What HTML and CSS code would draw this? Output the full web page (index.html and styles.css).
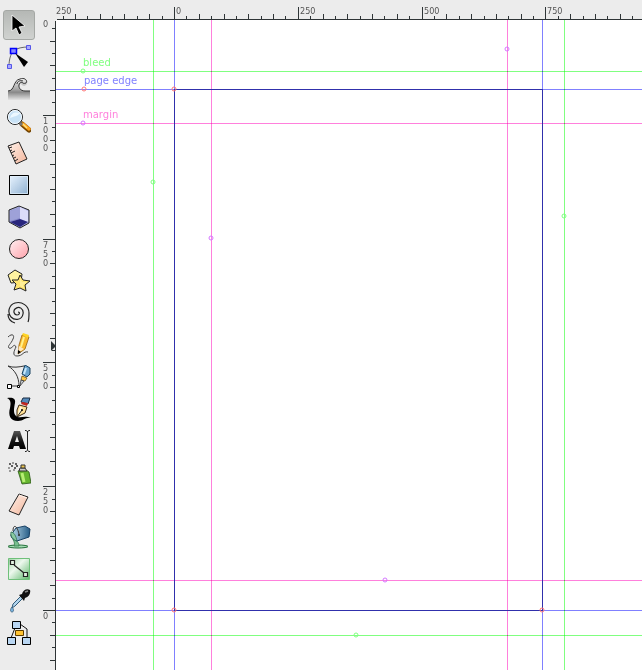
FILE: index.html
```
<!DOCTYPE html>
<html lang="en">
<head>
<meta charset="utf-8">
<title>Page guides</title>
<link rel="stylesheet" href="styles.css">
</head>
<body>
<div class="app">
<nav class="toolbox" aria-label="Tools">
<button class="tool active" aria-label="Select"><svg viewBox="0 0 24 24"><path d="M5 2V18L9 15L12 22L15 20L12 14L18 13Z" fill="#000" stroke="#fff" stroke-width=".8"/></svg></button>
<button class="tool" aria-label="Edit nodes"><svg viewBox="0 0 24 24"><path d="M2 21C2 14 4 9 6 6C10 3 16 2 21 2" fill="none" stroke="#666"/><g fill="#aaf" stroke="#5555e8"><path d="M.5 19.500h4v4h-4zM19.500.5h4v4h-4z"/></g><path d="M3.500 3.500h6v5h-6z" fill="#88f" stroke="#00f" stroke-width="1.500"/><path d="M8 8L21 17L17 22Z"/></svg></button>
<button class="tool" aria-label="Tweak"><svg viewBox="0 0 24 24"><defs><linearGradient id="wave" x2="0" y2="1"><stop stop-color="#f4f4f4"/><stop offset=".5" stop-color="#aaa"/><stop offset=".65" stop-color="#888"/><stop offset="1" stop-color="#e4e4e4"/></linearGradient></defs><path d="M1 23V14C8 14 6 2 14 1C18 0 22 4 20 7C18 10 14 9 14 6C11 8 12 13 17 14H23V23Z" fill="url(#wave)"/><path d="M1 14C8 14 6 3 13 2C18 0 21 4 19 6C17 7 15 6 15 5C10 6 11 14 18 14H23M10 7C10 4 14 3 16 4" fill="none" stroke="#333"/></svg></button>
<button class="tool" aria-label="Zoom"><svg viewBox="0 0 24 24"><path d="M15 15L22 21" stroke="#754500" stroke-width="5" stroke-linecap="round"/><path d="M16 15L22 20" stroke="#fda21c" stroke-width="3.500" stroke-linecap="round"/><path d="M16 15L20 19" stroke="#ffe27b" stroke-width="1.500"/><path d="M12 13L15 16" stroke="#777" stroke-width="3"/><circle cx="8" cy="8" r="7.500" fill="#c8e2f6" stroke="#222"/><circle cx="8" cy="8" r="6.500" fill="none" stroke="#f8fcff"/><path d="M3 9C5 3 8 3 13 4C10 8 7 7 3 9" fill="#edf8ff"/></svg></button>
<button class="tool" aria-label="Measure"><svg viewBox="0 0 24 24"><defs><linearGradient id="peach" x2="1" y2="1"><stop stop-color="#fff2ea"/><stop offset="1" stop-color="#f3b59b"/></linearGradient></defs><path d="M1 5L12 1L20 18L9 23Z" fill="url(#peach)" stroke="#222"/><path d="M2 7L5 6M3 10L5 9M4 12L8 10M5 15L7 14M7 17L9 16M8 20L11 18" stroke="#222"/></svg></button>
<button class="tool" aria-label="Rectangle"><svg viewBox="0 0 24 24"><defs><linearGradient id="sky" x2="1" y2="1"><stop stop-color="#e9f4ff"/><stop offset="1" stop-color="#8dafd0"/></linearGradient></defs><path d="M2.500 2.500h19v19h-19z" fill="url(#sky)" stroke="#000"/><path d="M3.500 3.500h17v17h-17z" fill="none" stroke="#e4f0fa" stroke-width=".7"/></svg></button>
<button class="tool" aria-label="3D box"><svg viewBox="0 0 24 24"><path d="M2 5L12 1L22 5V18L13 23L2 17Z" fill="#aaaee0" stroke="#222"/><path d="M3 6L13 2V14L3 17Z" fill="#8589c8"/><path d="M13 2L21 6V17L13 14Z" fill="#dcdcf8"/><path d="M3 17L13 14L21 17L13 22Z" fill="#29267d"/><path d="M3 6L13 2V13L3 16Z" fill="#9ea1d8"/></svg></button>
<button class="tool" aria-label="Ellipse"><svg viewBox="0 0 24 24"><defs><linearGradient id="rose" x2="1" y2="1"><stop stop-color="#fff0f2"/><stop offset="1" stop-color="#ffa1aa"/></linearGradient></defs><circle cx="12" cy="12" r="9.500" fill="url(#rose)" stroke="#222"/></svg></button>
<button class="tool" aria-label="Star"><svg viewBox="0 0 24 24"><g fill="#fff3a0" stroke="#222"><path d="M1 6L8 1L15 5L14 13L4 14Z"/><path d="M13 6L16 11L23 12L18 16L19 22L13 19L7 21L9 15L5 11L11 11Z" fill="#ffe56f"/></g><path d="M13 9L15 13L20 13L16 16L17 19L13 17" fill="#ffef99"/></svg></button>
<button class="tool" aria-label="Spiral"><svg viewBox="0 0 24 24"><path d="M11 11C13 11 13 14 10 14C7 14 6 10 8 8C12 4 17 8 16 13C15 19 8 20 4 16C0 11 2 4 8 2C15 0 22 5 22 12C22 16 22 19 21 21M8 22C4 21 1 18 1 13" fill="none" stroke="#222" stroke-width="1.200"/></svg></button>
<button class="tool" aria-label="Pencil"><svg viewBox="0 0 24 24"><path d="M1 4C5 0 8 2 6 6C4 11 0 13 2 15C5 17 7 9 9 14C7 18 5 23 10 23C16 23 16 18 21 19" fill="none" stroke="#444"/><path d="M15 2L22 4L18 16L11 21L12 12Z" fill="#f8b82c" stroke="#8a5200" stroke-width=".7"/><path d="M17 4L14 14" stroke="#fff18c" stroke-width="2"/><path d="M12 13L17 16L11 20Z" fill="#ffe8c0"/><path d="M11 17L14 19L11 21Z"/><path d="M16 0L22 2L21 5L15 2Z" fill="#ffd526"/></svg></button>
<button class="tool" aria-label="Bezier"><svg viewBox="0 0 24 24"><path d="M12 21H2M12 21C12 12 8 5 1 1C6 3 12 2 17 1" fill="none" stroke="#333"/><path d="M.5 19.500h4v4h-4zM10.500 20.500h2v2h-2z" fill="#fff" stroke="#000"/><path d="M18 0L23 3L23 9L20 12L15 9Z" fill="#6ca5cf" stroke="#194260"/><path d="M19 3L17 9" stroke="#c5e7fb" stroke-width="2"/><path d="M15 11L20 13L18 16L14 15Z" fill="#ffc847" stroke="#5d4410" stroke-width=".7"/><path d="M14 15L17 16L13 21Z" fill="#c9d0d6" stroke="#333" stroke-width=".8"/></svg></button>
<button class="tool" aria-label="Calligraphy"><svg viewBox="0 0 24 24"><path d="M0 1C5 0 9 1 8 6C7 11 6 16 9 19C13 22 17 18 24 21C18 20 17 24 11 24C3 24 1 18 3 11C4 6 4 3 0 1Z"/><path d="M16 1L23 1L21 7L14 5Z" fill="#568abb" stroke="#192b41"/><path d="M15 5L21 6L20 9L14 7Z" fill="#c3261e"/><path d="M12 8L20 10L18 16L10 20L10 13Z" fill="#ffe096" stroke="#3d2b14"/><path d="M14 10L12 17" stroke="#fff8df" stroke-width="2"/><path d="M15 13L10 20" stroke="#222"/><circle cx="15" cy="13" r="1"/></svg></button>
<button class="tool" aria-label="Text"><svg viewBox="0 0 24 24"><defs><linearGradient id="ink" x2="0" y2="1"><stop stop-color="#555"/><stop offset=".6" stop-color="#111"/><stop offset="1"/></linearGradient></defs><path d="M7 2H13L19 20H13L12 17H7L6 20H1ZM10 7L8 13H12Z" fill="url(#ink)" fill-rule="evenodd"/><path d="M18 1.500H19L20.500 2.500L22 1.500H23M20.500 2V21M18 22.500H19L20.500 21.500L22 22.500H23" fill="none" stroke="#222"/></svg></button>
<button class="tool" aria-label="Spray"><svg viewBox="0 0 24 24"><path d="M11 10L19 9L22 11L24 22L15 23Z" fill="#65b52f" stroke="#285514" stroke-width=".8"/><path d="M15 12L17 21" stroke="#b7ee74" stroke-width="3"/><path d="M12 10L13 7H18L20 10Z" fill="#ccc" stroke="#333"/><path d="M14 4L18 4L18 7H14Z" fill="#eac34e" stroke="#333"/><g fill="#333"><circle cx="3" cy="3" r="1"/><circle cx="6" cy="2" r=".8"/><circle cx="10" cy="5" r="1"/><circle cx="5" cy="5" r="1"/><circle cx="8" cy="7" r="1"/><circle cx="2" cy="7" r=".8"/><circle cx="7" cy="9" r=".8"/><circle cx="9" cy="3" r="1"/><circle cx="3" cy="10" r=".8"/></g></svg></button>
<button class="tool" aria-label="Eraser"><svg viewBox="0 0 24 24"><path d="M12 1L21 4L12 22L2 18Z" fill="url(#peach)" stroke="#222"/><path d="M12 2L20 5" stroke="#fff4ed"/></svg></button>
<button class="tool" aria-label="Fill"><svg viewBox="0 0 24 24"><ellipse cx="11" cy="21.500" rx="10" ry="1.500" fill="#a2dab2" stroke="#237039"/><path d="M4 9C4 13 9 17 7 21H12C12 16 9 17 8 12Z" fill="#78bf8e" stroke="#287040" stroke-width=".7"/><defs><linearGradient id="pail"><stop stop-color="#bcdced"/><stop offset="1" stop-color="#245b85"/></linearGradient></defs><path d="M9 3L18 1L23 4L22 12L10 16C6 14 4 13 4 10Z" fill="url(#pail)" stroke="#174064"/><path d="M4 7C7 7 9 11 10 16C6 15 3 11 4 7Z" fill="#89c9a0" stroke="#236144" stroke-width=".7"/><path d="M6 6C6-1 10 0 12 9" fill="none" stroke="#333"/><circle cx="12" cy="10" r="1" fill="#222"/></svg></button>
<button class="tool" aria-label="Gradient"><svg viewBox="0 0 24 24"><defs><linearGradient id="green" x2="1" y2="1"><stop stop-color="#9bd3a3"/><stop offset=".4" stop-color="#edf8ee"/><stop offset="1" stop-color="#5bb568"/></linearGradient></defs><path d="M1.500 1.500h21v21h-21z" fill="url(#green)" stroke="#6fc07a"/><path d="M7 8L17 16" stroke="#222" stroke-width="1.200"/><path d="M3.500 3.500h4v4h-4zM16.500 15.500h4v4h-4z" fill="#e2f4e3" stroke="#222" stroke-width="1.200"/></svg></button>
<button class="tool" aria-label="Dropper"><svg viewBox="0 0 24 24"><path d="M14 7L16 9L8 17L5 19L6 15Z" fill="#b1d4ed" stroke="#315a78"/><path d="M12 6L15 5C16 1 20-1 23 1C24 4 22 8 18 9L17 12Z" fill="#111"/><path d="M18 3L21 2" stroke="#888" stroke-width="1.500"/><path d="M5 18C3 20 3 23 5 23C7 23 7 20 5 18Z" fill="#79b3df" stroke="#31536c" stroke-width=".7"/></svg></button>
<button class="tool" aria-label="Connector"><svg viewBox="0 0 24 24"><path d="M8 7L4 17M13 3L20 8V17" fill="none" stroke="#111"/><g fill="#b9d6f2" stroke="#000"><path d="M5.500.5h8v7h-8zM.5 16.500h8v7h-8zM15.500 16.500h8v7h-8z"/></g><path d="M8.500 9.500h8v5h-8z" fill="#ffc332" stroke="#5c3c00"/></svg></button>
</nav>
<svg class="ruler side"><rect x="13" y="21" width="1" height="100%"/><path d="M9 341L14 346L9 351Z"/><g id="side-ticks"></g></svg>
<main class="workspace">
<svg class="ruler top"><rect x="1" y="19" width="100%" height="1"/><g id="top-ticks"></g></svg>
<svg class="canvas" aria-label="Page with guides">
<g class="guides">
<g class="bleed"><rect y="51" width="100%" height="1"/><rect y="615" width="100%" height="1"/><rect x="97" width="1" height="100%"/><rect x="508" width="1" height="100%"/></g>
<g class="edge"><rect y="69" width="100%" height="1"/><rect y="590" width="100%" height="1"/><rect x="118" width="1" height="100%"/><rect x="486" width="1" height="100%"/></g>
<g class="margin"><rect y="103" width="100%" height="1"/><rect y="560" width="100%" height="1"/><rect x="155" width="1" height="100%"/><rect x="451" width="1" height="100%"/></g>
</g>
<path class="page" fill-rule="evenodd" d="M118 69H487V591H118ZM119 70V590H486V70Z"/>
<g class="handles">
<g stroke="#80ff80"><circle cx="27" cy="51" r="2"/><circle cx="97" cy="162" r="2"/><circle cx="508" cy="196" r="2"/><circle cx="300" cy="615" r="2"/></g>
<g stroke="#ff7777"><circle cx="28" cy="69" r="2"/><circle cx="118" cy="69" r="2"/><circle cx="118" cy="590" r="2"/><circle cx="486" cy="590" r="2"/></g>
<g stroke="#d577ff"><circle cx="27" cy="103" r="2"/><circle cx="155" cy="218" r="2"/><circle cx="451" cy="29" r="2"/><circle cx="329" cy="560" r="2"/></g>
</g>
<text class="bleed" x="27" y="46">bleed</text><text class="edge" x="28" y="64">page edge</text><text class="margin" x="27" y="98">margin</text>
</svg>
</main>
</div>
<script src="rulers.js"></script>
</body>
</html>
```
FILE: styles.css
```
body {
  margin: 0;
  background: #ececec;
}
.app {
  display: grid;
  grid-template-columns: 42px 14px 1fr;
  height: 100vh;
  overflow: hidden;
}
.toolbox {
  display: flex;
  flex-direction: column;
  gap: 2px;
  padding: 10px 7px 0 3px;
}
.tool {
  display: flex;
  flex: none;
  align-items: center;
  justify-content: center;
  height: 30px;
  padding: 0;
  border: 1px solid transparent;
  border-radius: 3px;
  background: none;
}
.tool.active {
  border-color: #a5a8a5;
  background: linear-gradient(#b5b8b5, #d0d2d0);
}
.tool svg {
  width: 24px;
  height: 24px;
}
.ruler {
  display: block;
  width: 100%;
  fill: #2e3436;
}
.ruler text {
  fill: #555;
  font: 9px "DejaVu Sans Condensed", "DejaVu Sans", sans-serif;
}
.side {
  height: 100%;
}
.workspace {
  display: grid;
  grid-template-rows: 20px 1fr;
  min-width: 0;
  min-height: 0;
}
.top {
  height: 20px;
}
.canvas {
  display: block;
  width: 100%;
  height: 100%;
  background: #fff;
  font: 10px "DejaVu Sans", sans-serif;
}
.guides rect {
  mix-blend-mode: multiply;
}
.bleed {
  fill: #80ff80;
}
.edge {
  fill: #8080ff;
}
.margin {
  fill: #ff80dc;
}
.page {
  fill: #3030ac;
}
.handles {
  fill: none;
}
```
FILE: rulers.js
```
const NS = "http://www.w3.org/2000/svg";
const STEP = 12.38;
const topTicks = document.getElementById("top-ticks");
const sideTicks = document.getElementById("side-ticks");

function add(parent, name, attrs, text) {
  const node = document.createElementNS(NS, name);
  for (const key in attrs) node.setAttribute(key, attrs[key]);
  if (text) node.textContent = text;
  parent.appendChild(node);
}

// Ticks every 25 units, with a label every 250
function drawRulers() {
  topTicks.replaceChildren();
  sideTicks.replaceChildren();

  const width = window.innerWidth - 56;
  for (let i = -9; 118 + i * STEP < width; i++) {
    const x = Math.round(118 + i * STEP);
    const y = i % 10 === 0 ? 7 : i % 2 === 0 ? 14 : 16;
    add(topTicks, "rect", { x, y, width: 1, height: 19 - y });
    if (i % 10 === 0 && x + 24 < width) {
      add(topTicks, "text", { x: x + 2, y: 14 }, String(i * 25));
    }
  }
  add(topTicks, "text", { x: 0, y: 14 }, "250");

  const height = window.innerHeight;
  for (let i = 47; 610 - i * STEP < height; i--) {
    const y = Math.round(610 - i * STEP);
    const x = i % 10 === 0 ? 1 : i % 2 === 0 ? 8 : 10;
    add(sideTicks, "rect", { x, y, width: 13 - x, height: 1 });
    if (i % 10 === 0 && y + 40 < height) {
      [...String(Math.abs(i * 25))].forEach((digit, n) => {
        add(sideTicks, "text", { x: 1, y: y + 9 + n * 9 }, digit);
      });
    }
  }
  add(sideTicks, "text", { x: 1, y: 27 }, "0");
}

drawRulers();
window.addEventListener("resize", drawRulers);
```
